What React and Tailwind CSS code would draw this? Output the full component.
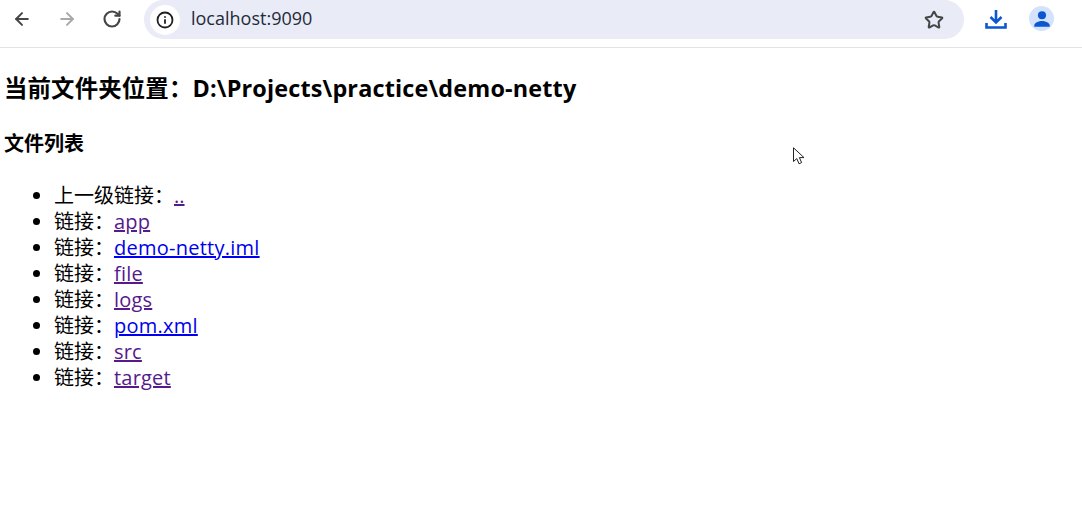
import { Info, Star, ArrowLeft, ArrowRight, RotateCw } from 'lucide-react';

const links = [
  { name: 'app', visited: true },
  { name: 'demo-netty.iml', visited: false },
  { name: 'file', visited: true },
  { name: 'logs', visited: true },
  { name: 'pom.xml', visited: false },
  { name: 'src', visited: true },
  { name: 'target', visited: true },
];

const pageFont = "font-['Open_Sans','Noto_Sans_CJK_SC',sans-serif]";

const Toolbar = () => (
  <div className="flex h-[48px] items-start border-b border-[#e3e3e3] bg-white">
    <div className="flex h-[37px] w-[144px] items-center pl-[12px]">
      <ArrowLeft className="h-5 w-5 text-[#444746]" strokeWidth={2.4} />
      <ArrowRight className="ml-[25px] h-5 w-5 text-[#a9a9a9]" strokeWidth={2.4} />
      <RotateCw className="ml-[25px] h-5 w-5 text-[#444746]" strokeWidth={2.6} />
    </div>
    <div className="flex h-[39px] w-[820px] items-center rounded-[20px] bg-[#e9ecf6] pl-[6px] pr-[20px]">
      <div className="flex h-[30px] w-[30px] items-center justify-center rounded-full bg-white">
        <Info className="h-[18px] w-[18px] text-[#1f1f1f]" strokeWidth={2.4} />
      </div>
      <span className={`ml-[11px] -translate-y-px text-[18px] text-[#1f2a3a] ${pageFont}`}>localhost:9090</span>
      <Star className="ml-auto h-5 w-5 text-[#444746]" strokeWidth={2.4} />
    </div>
    <div className="flex h-[37px] items-center pl-[20px]">
      <svg viewBox="0 0 24 24" className="h-[24px] w-[24px]" fill="none" stroke="#0b57d0" strokeWidth="2.6">
        <path d="M12 3v12M6.5 10l5.5 5.5 5.5-5.5" />
        <path d="M2.5 16v4.5h19V16" />
      </svg>
      <div className="ml-[21px] flex h-[25px] w-[25px] items-center justify-center rounded-full bg-[#d3e3fd]">
        <svg viewBox="0 0 24 24" className="h-[22px] w-[22px]" fill="#0b57d0">
          <circle cx="12" cy="8" r="4.4" />
          <path d="M3.5 19.5c0-3.6 5.2-5.2 8.5-5.2s8.5 1.6 8.5 5.2V20.5H3.5z" />
        </svg>
      </div>
    </div>
  </div>
);

const App = () => {
  return (
    <div className="relative h-[519px] w-[1082px] overflow-hidden bg-white text-black">
      <Toolbar />
      <div className={`pl-[4px] ${pageFont}`}>
        <h2 className="mt-[24px] text-[23.4px] leading-[32px] font-bold tracking-[0.17px]">当前文件夹位置：D:\Projects\practice\demo-netty</h2>
        <h3 className="mt-[27px] text-[20px] leading-[26px] font-bold">文件列表</h3>
        <ul className="mt-[26px] list-disc pl-[50px] text-[20px] leading-[26px]">
          <li>
            上一级链接：<a href="#" className="text-[#551a8b] underline">..</a>
          </li>
          {links.map((link) => (
            <li key={link.name}>
              链接：
              <a
                href="#"
                className={
                  link.visited
                    ? 'tracking-[0.2px] text-[#551a8b] underline'
                    : 'tracking-[0.25px] text-[#0000ee] underline'
                }
              >
                {link.name}
              </a>
            </li>
          ))}
        </ul>
      </div>
      {/* mouse pointer caught in the screenshot */}
      <svg viewBox="0 0 14 20" className="absolute left-[793px] top-[147px] h-[20px] w-[14px]" fill="white" stroke="#222" strokeWidth="1">
        <path d="M0.5 0.8V14.5L3.8 11.6L6 16.8L8.6 15.6L6.4 10.6H11z" />
      </svg>
    </div>
  );
};

export default App;
